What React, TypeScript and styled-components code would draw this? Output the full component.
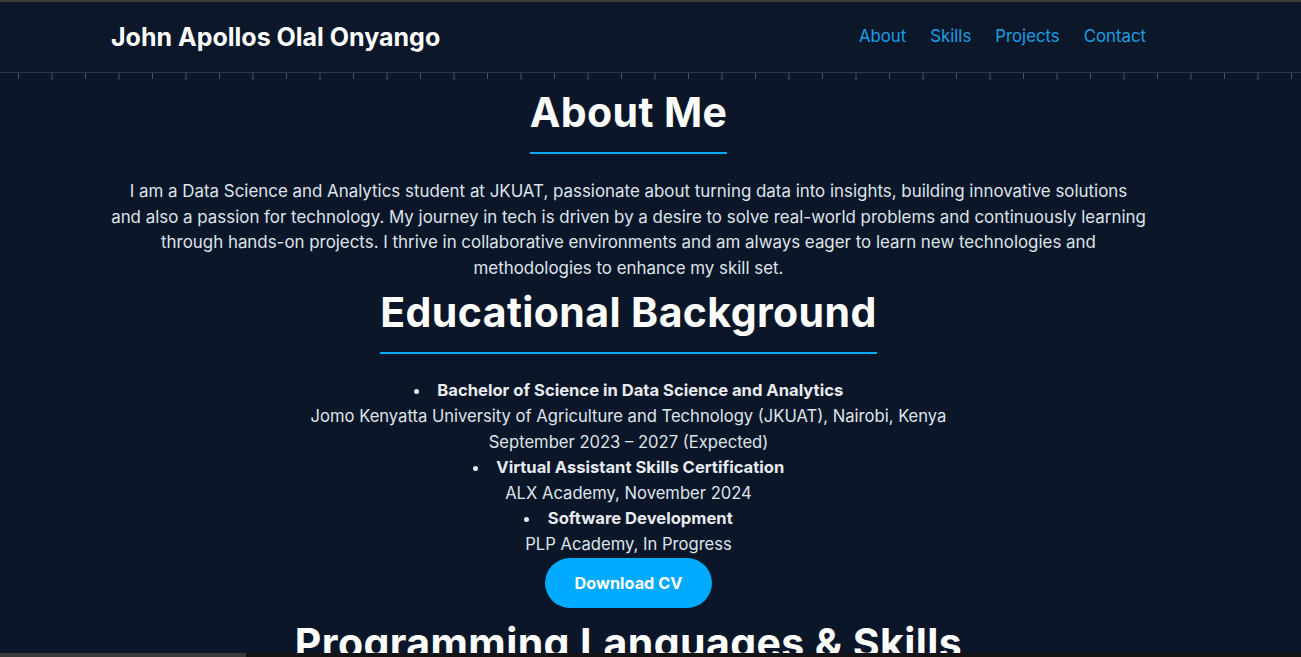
import React from "react";
import styled, { createGlobalStyle } from "styled-components";

const GlobalStyle = createGlobalStyle`
  * { box-sizing: border-box; }
  body {
    margin: 0;
    background: #0b1729;
    color: #dfe3ea;
    font-family: Inter, "Open Sans", sans-serif;
  }
`;

const Header = styled.header`
  border-top: 2px solid #3c3c3c;
  height: 72px;
  background: #0c182a;
`;

const Container = styled.div`
  width: 1035px;
  margin-left: 111px;
`;

const HeaderInner = styled(Container)`
  height: 100%;
  display: flex;
  align-items: center;
  justify-content: space-between;
`;

const Brand = styled.div`
  font-size: 25px;
  font-weight: 700;
  color: #ffffff;
`;

const Nav = styled.nav`
  display: flex;
  gap: 24px;
  padding-bottom: 3px;
`;

const NavLink = styled.a`
  font-size: 16.8px;
  color: #189fe4;
  text-decoration: none;
  cursor: pointer;
`;

const RulerSvg = styled.svg`
  display: block;
  width: 100%;
  height: 8px;
`;

const Main = styled(Container)`
  padding-top: 8px;
  text-align: center;
`;

const SectionTitle = styled.h2`
  width: fit-content;
  margin: 0 auto 24px;
  font-size: 41px;
  font-weight: 700;
  letter-spacing: 0.4px;
  line-height: 48px;
  color: #ffffff;
  padding-bottom: 16px;
  border-bottom: 2px solid #00aaff;
`;

const Intro = styled.p`
  margin: 0 0 7px;
  padding-top: 1px;
  font-size: 16.9px;
  line-height: 25.6px;
  color: #dfe4eb;
`;

const EduList = styled.ul`
  margin: 0;
  padding: 0;
  list-style: disc inside;
`;

const EduItem = styled.li`
  font-size: 16.6px;
  line-height: 25.6px;
  color: #dfe4eb;

  &::marker {
    color: #e6e9ee;
  }
`;

const Degree = styled.strong`
  font-weight: 700;
  color: #e8ebf0;
  margin-left: 1px;
`;

const DownloadButton = styled.a`
  display: inline-flex;
  align-items: center;
  justify-content: center;
  height: 50px;
  padding: 0 29.5px;
  border-radius: 25px;
  background: #00aaff;
  color: #ffffff;
  font-size: 16.3px;
  font-weight: 700;
  text-decoration: none;
  cursor: pointer;
`;

const SkillsTitle = styled(SectionTitle)`
  margin-top: 11px;
`;

const StatusStrip = styled.div`
  position: fixed;
  left: 0;
  right: 0;
  bottom: 0;
  height: 4px;
  background: linear-gradient(to right, #3a3a3a 0 246px, #151515 246px);
`;

const education = [
  {
    degree: "Bachelor of Science in Data Science and Analytics",
    lines: [
      "Jomo Kenyatta University of Agriculture and Technology (JKUAT), Nairobi, Kenya",
      "September 2023 – 2027 (Expected)",
    ],
  },
  {
    degree: "Virtual Assistant Skills Certification",
    lines: ["ALX Academy, November 2024"],
  },
  {
    degree: "Software Development",
    lines: ["PLP Academy, In Progress"],
  },
];

const Ruler = () => (
  <RulerSvg viewBox="0 0 1301 8" preserveAspectRatio="none">
    <defs>
      <pattern id="ticks" x="18" y="0" width="67" height="8" patternUnits="userSpaceOnUse">
        <rect x="0" y="1" width="1" height="6" fill="#465262" />
        <rect x="33.5" y="1" width="1" height="6" fill="#465262" />
        <rect x="32.5" y="6.5" width="3" height="1" fill="#3a4656" />
      </pattern>
    </defs>
    <rect x="0" y="0" width="1301" height="1" fill="#2b3748" />
    <rect x="0" y="0" width="1301" height="8" fill="url(#ticks)" />
  </RulerSvg>
);

export default function App() {
  return (
    <>
      <GlobalStyle />
      <Header>
        <HeaderInner>
          <Brand>John Apollos Olal Onyango</Brand>
          <Nav>
            <NavLink>About</NavLink>
            <NavLink>Skills</NavLink>
            <NavLink>Projects</NavLink>
            <NavLink>Contact</NavLink>
          </Nav>
        </HeaderInner>
      </Header>
      <Ruler />
      <Main>
        <SectionTitle>About Me</SectionTitle>
        <Intro>
          I am a Data Science and Analytics student at JKUAT, passionate about turning data into
          insights, building innovative solutions and{"\u00a0"}also a passion for technology. My
          journey in tech is driven by a desire to solve real-world problems and continuously
          learning through hands-on projects. I thrive in collaborative environments and am always
          eager to learn new technologies and methodologies to enhance my skill set.
        </Intro>
        <SectionTitle>Educational Background</SectionTitle>
        <EduList>
          {education.map((e) => (
            <EduItem key={e.degree}>
              <Degree>{e.degree}</Degree>
              {e.lines.map((l) => (
                <React.Fragment key={l}>
                  <br />
                  {l}
                </React.Fragment>
              ))}
            </EduItem>
          ))}
        </EduList>
        <DownloadButton>Download CV</DownloadButton>
        <SkillsTitle>Programming Languages &amp; Skills</SkillsTitle>
      </Main>
      <StatusStrip />
    </>
  );
}
